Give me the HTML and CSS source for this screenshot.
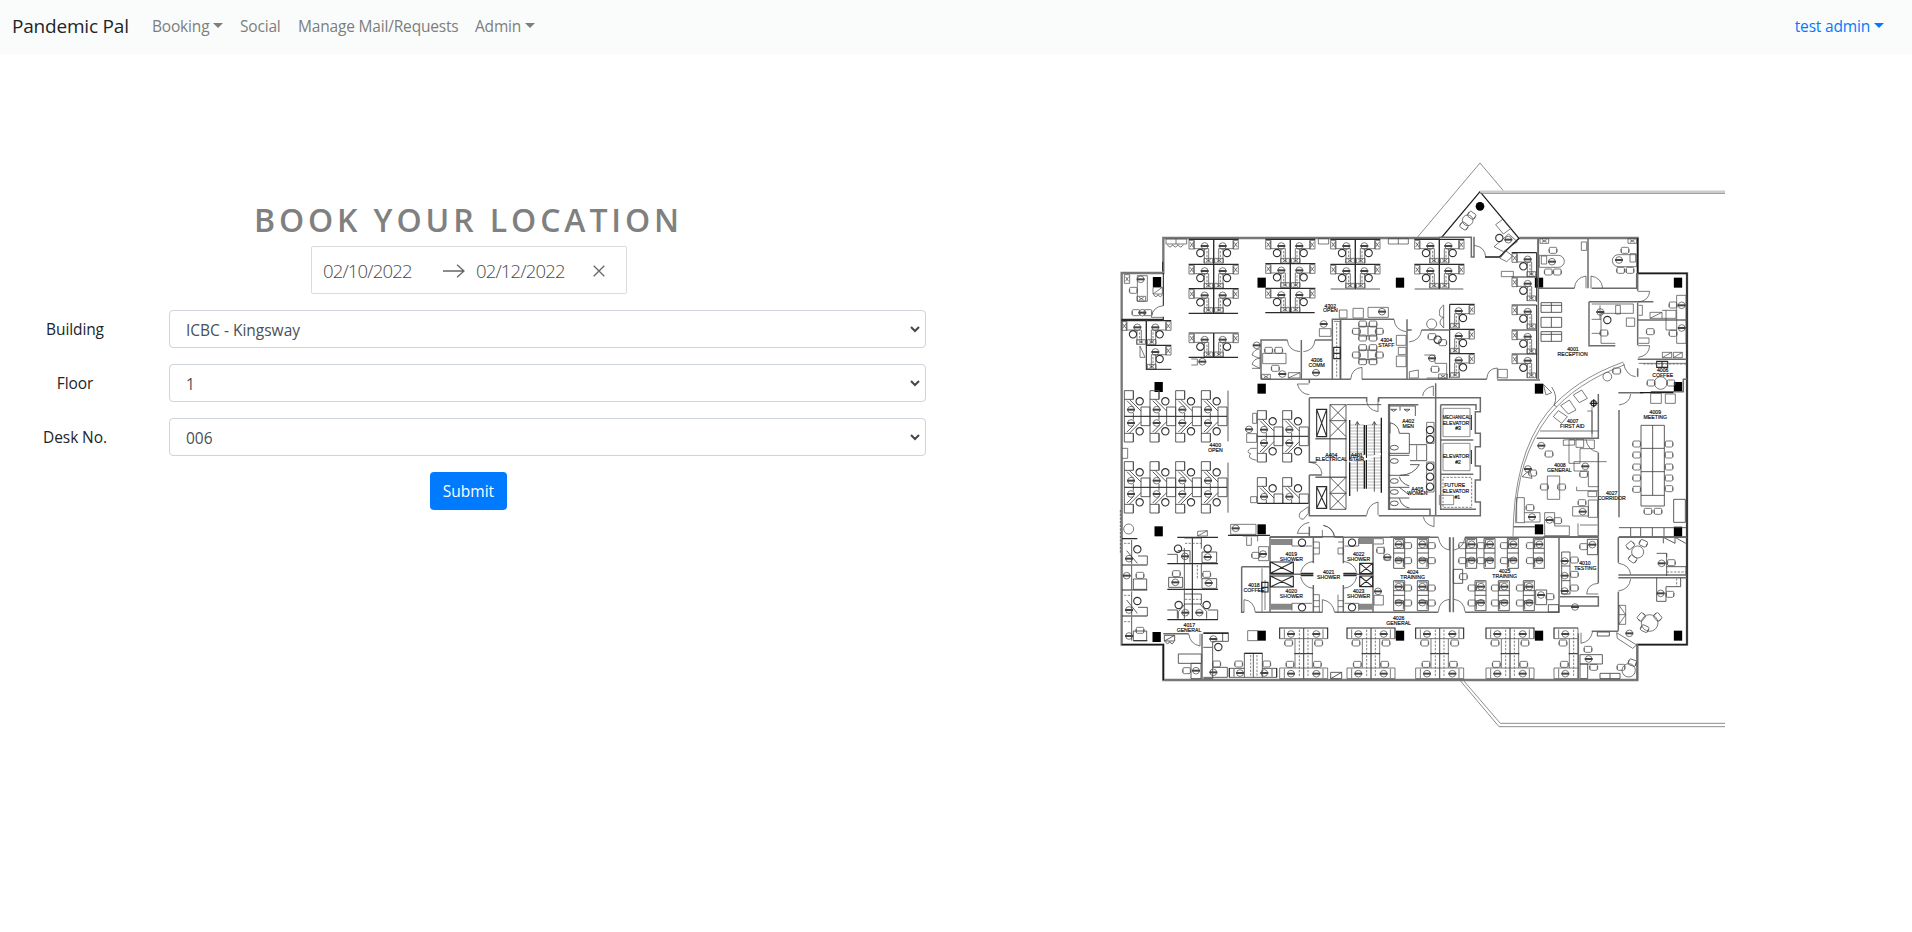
FILE: index.html
```html
<!DOCTYPE html>
<html lang="en">
<head>
<meta charset="utf-8">
<title>Pandemic Pal</title>
<link rel="stylesheet" href="styles.css">
</head>
<body>
<nav class="navbar">
  <a class="brand">Pandemic Pal</a>
  <div class="links">
    <a class="link caret booking">Booking</a>
    <a class="link social">Social</a>
    <a class="link mail">Manage Mail/Requests</a>
    <a class="link caret admin">Admin</a>
  </div>
  <a class="link caret user">test admin</a>
</nav>
<main class="page">
  <section class="booking-form">
    <h1 class="title">BOOK YOUR LOCATION</h1>
    <div class="dates">
      <span class="date">02/10/2022</span>
      <svg class="arrow" width="22" height="14" viewBox="0 0 22 14"><path d="M0 7H21M14 .8L21 7l-7 6.200"/></svg>
      <span class="date">02/12/2022</span>
      <svg class="clear" width="12" height="12" viewBox="0 0 12 12"><path d="M.7.7l10.600 10.600M11.300.7L.7 11.300"/></svg>
    </div>
    <div class="field"><span class="label">Building</span><div class="select"><span>ICBC - Kingsway</span><svg width="10" height="7" viewBox="0 0 10 7"><path d="M1 1l4 4 4-4"/></svg></div></div>
    <div class="field"><span class="label">Floor</span><div class="select"><span>1</span><svg width="10" height="7" viewBox="0 0 10 7"><path d="M1 1l4 4 4-4"/></svg></div></div>
    <div class="field"><span class="label">Desk No.</span><div class="select"><span>006</span><svg width="10" height="7" viewBox="0 0 10 7"><path d="M1 1l4 4 4-4"/></svg></div></div>
    <button class="submit">Submit</button>
  </section>
  <section class="floor">
    <svg class="plan" width="620" height="590" viewBox="0 0 1860 1770">
      <defs>
        <path id="c" d="M-11-6Q-11-9-8-9H8Q11-9 11-6V5Q11 9 7 9H-7Q-11 9-11 5ZM-12-4V6M12-4V6"/>
        <g id="t"><circle r="10"/><path class="tag" d="M-12 0H12"/></g>
        <circle id="o" r="11" class="seat"/>
        <path id="x" d="M-8-13H8V13H-8ZM-5-7L5 7M5-7L-5 7"/>
        <path id="y" d="M-13-7H13V7H-13ZM-7-4L7 4M7-4L-7 4"/>
        <rect id="k" class="solid" x="-12.500" y="-15" width="25" height="30"/>
        <g id="p">
          <path class="wall" d="M0 0H75M0 0V74"/>
          <path d="M15 28H60V5M15 28V68M28 28V72"/><path class="dash" d="M20 35V60"/>
          <use href="#t" x="27" y="20"/><use href="#o" x="40" y="41"/><use href="#x" x="66" y="16"/><use href="#y" x="16" y="64"/>
        </g>
        <g id="q"><use href="#p"/><use href="#p" transform="scale(-1 1)"/></g>
        <g id="w">
          <path class="mid" d="M0-77V0M0-77H27V-51H0M27-77V-51M15-51L50-16M8-47L28-27M27 0V-10M50 0V-28H77V0"/>
          <use href="#t" x="20" y="-20"/><use href="#o" x="46" y="-45"/>
        </g>
        <g id="v"><use href="#w"/><use href="#w" transform="scale(1 -1)"/><path class="wall" d="M0 0H77"/></g>
        <g id="h">
          <path class="wall" d="M0 0H-72V32"/>
          <path d="M-72 32H-26V120H-72V152H0V0M-58 4V30M-58 122V150M-26 32H0M-26 120H0"/><path class="wall" d="M-28 77H0"/>
          <path class="dash" d="M-13 5V148"/>
          <use href="#t" x="-38" y="18"/><use href="#t" x="-38" y="137"/><use href="#c" x="-45" y="45"/><use href="#c" x="-41" y="109"/>
        </g>
        <g id="m"><use href="#h"/><use href="#h" transform="scale(-1 1)"/></g>
        <g id="g"><path class="mid" d="M0 0H33V90H0ZM0 30H33M0 44H33M4 4H29V28M4 60H29V86"/><use href="#t" x="15" y="18"/><use href="#t" x="15" y="66"/><use href="#c" x="42" y="22" /><use href="#c" x="42" y="67"/></g>
        <g id="j"><use href="#g" transform="scale(-1 1)"/></g>
      </defs>

      <!-- outer shell and site lines -->
      <path class="shell" d="M990 264H160V369H35V1484H160V1590H1582V1484H1731V370H1583V264H1228"/>
      <path class="edge" d="M995 262L1110 125L1227 265L1168 321H1125M35 1484H160V1590M1582 1484H1731V370H1583V264"/>
      <path class="site" d="M922 262L1110 39L1180 122"/>
      <path class="band" d="M1110 125H1845"/><path class="site" d="M1110 130H1845M1050 1591L1167 1730H1845M1060 1591L1171 1720H1845"/>
      <circle class="solid" cx="1110" cy="169" r="13"/>

      <!-- structural columns -->
      <use href="#k" x="141" y="396"/><use href="#k" x="455" y="398"/><use href="#k" x="870" y="398"/><use href="#k" x="1287" y="398"/><use href="#k" x="1704" y="398"/>
      <use href="#k" x="146" y="711"/><use href="#k" x="455" y="716"/><use href="#k" x="1287" y="716"/><use href="#k" x="1704" y="711"/>
      <use href="#k" x="146" y="1144"/><use href="#k" x="455" y="1138"/><use href="#k" x="1287" y="1138"/><use href="#k" x="1704" y="1145"/>
      <use href="#k" x="140" y="1461"/><use href="#k" x="455" y="1457"/><use href="#k" x="870" y="1457"/><use href="#k" x="1287" y="1457"/><use href="#k" x="1704" y="1457"/>
      <path d="M413 1442H443V1472H413Z"/>

      <!-- north workstations -->
      <use href="#q" x="311" y="268"/><use href="#q" x="311" y="343"/><use href="#q" x="311" y="416"/><path class="wall" d="M236 490H384"/>
      <use href="#q" x="541" y="268"/><use href="#q" x="541" y="341"/><use href="#q" x="541" y="415"/><path class="wall" d="M466 488H614"/>
      <use href="#q" x="736" y="268"/><use href="#q" x="736" y="343"/><path class="mid" d="M662 417H810"/>
      <use href="#q" x="988" y="268"/><use href="#q" x="988" y="343"/><path class="mid" d="M914 417H1060"/>
      <use href="#q" x="311" y="549"/><path class="wall" d="M236 622H384"/>
      <use href="#p" x="109" y="512"/><use href="#p" transform="translate(109 512) scale(-1 1)"/><use href="#p" x="109" y="586"/><path class="wall" d="M109 658H184"/>
      <use href="#p" x="1019" y="463"/><use href="#p" x="1019" y="538"/><use href="#p" x="1019" y="611"/>
      <g transform="translate(1280 0) scale(-1 1)"><use href="#p" y="308"/><use href="#p" y="381"/><use href="#p" y="465"/><use href="#p" y="540"/><use href="#p" y="612"/></g>
      <path class="thick" d="M1285 264V688"/>
      <path d="M168 267H230V282H168ZM198 267V282M172 284q8 14 16 0q8 14 16 0q8 14 16 0M625 266H656V282H625ZM835 266H895V282H835ZM865 266V282"/>
      <path class="wall" d="M158 335V364M160 369V467M160 500V508H34"/>
      <path d="M160 467Q128 470 124 502H160M82 377H112V454H82Z"/>
      <use href="#x" x="51" y="387"/><use href="#t" x="92" y="388"/><use href="#y" x="94" y="446"/><use href="#c" x="70" y="421"/><use href="#t" x="97" y="488"/><use href="#c" x="78" y="488"/><use href="#c" x="114" y="488"/>
      <path d="M129 412H157V432H129ZM129 432L157 412M131 434q7 12 13 0q7 12 13 0M90 588V622H105ZM244 627H262V645H244"/><use href="#t" x="277" y="635"/>

      <!-- rooms 4302 - 4306 -->
      <path class="thick" d="M453 688V570H532M453 688H722M574 570V688M615 570H667M667 688V508H852M756 688H1130M891 508V688M891 540H905M935 540H1018M692 508V688M1162 690H1290"/>
      <path d="M532 570Q535 602 570 605M615 570Q612 602 580 605M722 688Q725 655 756 652V688M852 508Q855 540 888 545M935 540Q930 572 897 576M1130 688Q1132 655 1162 654V688M688 480H711V504H688ZM729 475H760V504H729ZM774 472H835V502H774ZM628 536H663V559H628ZM458 610H528V641H458ZM535 684V668H570V684ZL570 668M672 514H690V686M859 556H888V586H859ZM865 592H888V614H865ZM859 618H888V650H859ZM898 684V665L925 660V684Z"/>
      <path class="dash" d="M680 520V680"/>
      <path class="wall" d="M671 592H691V626H671ZM671 610H691"/>
      <use href="#t" x="816" y="485"/><use href="#t" x="641" y="522"/><use href="#t" x="618" y="668"/><use href="#c" x="476" y="601"/><use href="#c" x="506" y="601"/><use href="#c" x="496" y="655"/><use href="#t" x="517" y="672"/><use href="#y" x="468" y="680"/>
      <g id="tbl"><path class="mid" d="M747 529H800V558H747ZM774 529V558"/><use href="#c" x="758" y="522"/><use href="#c" x="789" y="522"/><use href="#c" x="758" y="564"/><use href="#c" x="789" y="564"/><use href="#c" x="739" y="544"/><use href="#c" x="808" y="544"/></g>
      <use href="#tbl" y="71"/>
      <path d="M450 597q-18 0-24 18q18 10 24 8M450 625q-18 0-24 18q18 10 24 12H426M450 600V655"/><use href="#t" x="440" y="586"/>
      <path d="M1001 465q-16 12-12 25q-4 10 12 12q-14 8-10 20l10 12V465M943 615H975V640H1010V684H950M1164 683V658H1192V684Z"/><circle cx="965" cy="522" r="15"/><use href="#o" x="983" y="569"/><use href="#c" x="966" y="560"/><use href="#c" x="998" y="578"/><use href="#t" x="966" y="625"/><use href="#c" x="975" y="658"/><use href="#y" x="999" y="679"/>

      <!-- apex office and north east rooms -->
      <path class="thick" d="M988 262H1084V321H1092V260M1434 265V278H1434V415M1284 415H1393M1445 415H1580V370M1284 264V385"/>
      <path d="M1092 286Q1125 290 1127 321M1393 415Q1396 383 1428 378V415M1478 415Q1475 383 1443 378V415M1288 316H1345A18 18 0 0 1 1345 352H1288ZM1580 314H1525A18 18 0 0 0 1525 350H1580ZM1294 318H1310V342H1294ZM1560 311H1577V336H1560ZM1414 276H1430V301H1414ZM1174 364H1210V380H1174ZM1157 224L1178 208L1202 236L1180 252ZM1152 290L1196 252L1222 275L1180 305ZM1170 325L1188 303L1208 318L1190 335Z"/>
      <circle cx="1073" cy="211" r="16"/><use href="#c" transform="translate(1085 196) rotate(35)"/><use href="#c" transform="translate(1062 228) rotate(35)"/><use href="#o" x="1168" y="264"/><use href="#t" x="1195" y="269"/><use href="#t" x="1326" y="335"/><use href="#t" x="1527" y="330"/><use href="#c" x="1329" y="301"/><use href="#c" x="1545" y="301"/><use href="#c" x="1315" y="366"/><use href="#c" x="1342" y="366"/><use href="#c" x="1532" y="361"/><use href="#c" x="1560" y="361"/><use href="#y" x="1303" y="273"/><use href="#y" x="1567" y="273"/>
      <path class="mid" d="M1293 458H1355V487H1293ZM1324 458V487M1293 502H1355V532H1293ZM1324 502V532M1293 545H1355V574H1293ZM1324 545V574M1293 466H1355M1293 553H1355"/>
      <path class="thick" d="M1535 455H1630M1437 455V587H1516M1437 455H1540"/><path d="M1445 462H1570V490H1473V508H1445M1473 508V580H1516M1445 550H1473M1517 466H1531V492H1517ZM1549 504H1574V529H1549ZM1470 466V508"/>
      <use href="#t" x="1471" y="486"/><use href="#o" x="1492" y="510"/><use href="#c" x="1482" y="549"/>
      <path class="thick" d="M1583 370V422M1583 458V585M1583 510H1730M1583 628H1730M1583 655V680M1622 725H1720V688H1731"/>
      <path d="M1583 424H1619Q1617 452 1585 456M1583 587H1619Q1617 617 1585 622M1577 680Q1550 678 1540 640M1620 505V487H1656V505ZL1656 487M1656 481H1698V505H1656M1700 436H1728V580H1700ZM1668 480V540H1700M1657 623V607H1685V623ZL1685 607M1690 623V607H1717V623ZL1717 607M1586 466H1597V496H1586M1586 564H1617V580H1586M1586 640H1730"/>
      <use href="#t" x="1715" y="466"/><use href="#t" x="1715" y="534"/><use href="#c" x="1689" y="465"/><use href="#c" x="1689" y="550"/><use href="#c" x="1621" y="545"/><path class="wall" d="M1640 634H1673V652H1640ZM1656 634V652"/><path class="dash" d="M1600 642H1728"/>
      <circle cx="1652" cy="699" r="19"/><use href="#c" x="1623" y="699"/><use href="#c" x="1683" y="699"/>

      <!-- curved corridor wall -->
      <path class="site" d="M1540 636Q1390 690 1310 790Q1210 920 1209 1160M1545 644Q1398 698 1318 795Q1219 924 1216 1120"/>
      <path d="M1300 703L1325 728L1308 735ZM1325 711Q1345 740 1332 765L1340 770"/><circle cx="1492" cy="680" r="13"/><use href="#c" x="1520" y="663"/>

      <!-- west open area -->
      <use href="#v" x="43" y="799"/><use href="#v" x="120" y="799"/><use href="#v" x="197" y="799"/><use href="#v" x="274" y="799"/><path class="mid" d="M354 722V874M354 938V1088"/>
      <use href="#v" x="43" y="1012"/><use href="#v" x="120" y="1012"/><use href="#v" x="197" y="1012"/><use href="#v" x="274" y="1012"/>
      <use href="#v" x="442" y="859"/><use href="#v" x="518" y="859"/><use href="#w" x="442" y="1060"/><use href="#w" x="518" y="1060"/><path class="wall" d="M442 1060H596"/>
      <path d="M36 895H53V925H36M428 790H440V820H428ZM410 851H440V877H410ZM440 895H422q-16 12 0 16q-14 14 18 20M422 1040H440V1058H422ZM570 1088q-8 18 10 20L595 1090V1070Z"/><use href="#t" x="417" y="838"/>
      <circle cx="56" cy="1137" r="15"/><path class="mid dash" d="M31 1080V1210"/>
      <path d="M362 1123H438V1153H362Z"/><path class="wall" d="M354 1156H480"/><use href="#t" x="377" y="1135"/>

      <!-- core -->
      <path class="thick" d="M598 690V700M598 743H770V755M806 755V743H960M598 743V937H620M598 975V1097H770M598 975H636M806 1097H960V1078H836V764H925M700 1160H480M598 1130V1160H640M938 743H1111V785H1096V850H1111V890H1096V948H1111V990H1096V1056H1111V1097H938M977 700V743M977 743V1097M992 764V1078H1098M992 764H1098V780M992 870H1090M992 973H1090M616 866H710M616 982H710"/>
      <path d="M562 702H596M562 702Q570 732 598 734M770 755Q775 780 804 785V745M938 738Q940 715 970 708V738M770 1095Q775 1062 804 1056V1095M600 937Q632 940 636 972M562 1150Q570 1122 598 1117M562 1150H598M640 1126Q668 1132 674 1160M940 1100Q944 1124 972 1130V1100"/>
      <path class="wall" d="M620 778H650V860H620ZL650 860M650 778L620 860M620 1010H650V1075H620ZL650 1075M650 1010L620 1075"/>
      <path class="mid" d="M660 764H708V1078H660ZM660 764L708 812L660 860M708 764L660 812L708 860M660 812H708M660 982L708 1030L660 1078M708 982L660 1030L708 1078M660 1030H708M770 764H814M710 764H770"/>
      <path class="stairs" d="M742 824V1018M793 824V1018"/><path class="mid" d="M742 815V1025M793 815V1025M736 825L742 815L748 825M787 825L793 815L799 825"/><path class="edge" d="M719 810V1038M763 825V1016M769 825V1016M814 803V1028"/><path class="cut" d="M718 935L764 918L765 928L813 912"/>
      <path class="mid" d="M839 764V1078M839 768H916V798M870 770V782M836 910H898M836 916H898M836 976H898M836 1012H898M836 1044H898M898 850V910M898 884H950V932H900M842 778H860L851 784ZM882 778H900L891 784ZM840 850V818Q866 824 868 850H898M870 976Q910 975 928 944H900M868 980Q873 1000 898 1008M868 1045Q875 1070 898 1074M868 1012L898 1035"/>
      <g class="mid"><ellipse cx="853" cy="893" rx="12" ry="7"/><ellipse cx="853" cy="933" rx="12" ry="7"/><ellipse cx="853" cy="993" rx="12" ry="7"/><ellipse cx="853" cy="1026" rx="12" ry="7"/><ellipse cx="853" cy="1060" rx="12" ry="7"/></g>
      <path d="M950 817H972V880H950ZM950 936H972V1026H950ZM920 886V930"/><use href="#o" x="960" y="840"/><use href="#o" x="960" y="868"/><use href="#o" x="960" y="950"/><use href="#o" x="960" y="980"/><use href="#o" x="960" y="1010"/>
      <path class="site" d="M999 775H1080V860H999ZM999 880H1080V962H999ZM988 1036H1031V1064H988Z"/><path class="dash" d="M999 982H1085V1072H999Z"/><path class="wall" d="M1084 795V840M1084 900V942"/>

      <!-- rooms 4007, 4008, 4009 and corridor -->
      <path class="thick" d="M1465 732V865H1280M1465 908V1160M1527 780V1102M1525 728H1600M1210 1130H1275M1300 1160H1465"/>
      <path class="edge" d="M1590 728H1690"/><path d="M1562 732Q1560 760 1527 765M1428 868Q1432 900 1465 907M1290 843H1465M1622 730H1654V760H1622ZM1666 732H1696V760H1666ZM1432 783H1446V852M1446 770V862M1352 767L1378 750L1398 780L1375 792ZM1390 735L1415 720L1432 745L1408 758ZM1330 800L1345 782L1372 800L1355 820ZM1377 870H1453V896H1410V940H1377ZM1360 886V870L1394 868V885ZM1398 868H1421V892H1398ZM1490 935H1392V963H1435V1010H1465M1400 1010V1022H1465M1312 978H1349V1048H1312ZM1388 1070H1435V1098H1388ZM1435 1050H1463V1102H1435ZM1434 1024H1460V1040H1434ZM1220 1043H1243V1116H1290V1088H1243M1220 1043V1118H1245M1304 1088H1334V1128H1378V1157H1304ZM1404 1120V1157H1463M1410 1125H1463M1236 980L1260 960L1266 985Z"/>
      <circle class="seat" cx="1451" cy="760" r="8"/><path class="edge" d="M1439 760H1463M1451 748V772"/>
      <use href="#t" x="1294" y="887"/><use href="#c" x="1317" y="912"/><use href="#t" x="1426" y="949"/><use href="#c" x="1421" y="973"/><use href="#t" x="1254" y="957"/><use href="#c" x="1268" y="969"/><use href="#c" x="1303" y="1011"/><use href="#c" x="1355" y="1011"/><use href="#t" x="1418" y="1085"/><use href="#c" x="1416" y="1058"/><use href="#c" x="1260" y="1073"/><use href="#t" x="1266" y="1101"/><use href="#t" x="1318" y="1110"/><use href="#c" x="1343" y="1112"/>
      <path class="mid" d="M1593 826H1663V1068H1593ZM1628 826V1036M1593 895H1663M1593 965H1663M1593 1036H1663M1691 1048H1726V1117H1691ZM1527 1133H1730M1562 1133V1158M1592 1133V1158M1627 1133V1158M1662 1133V1158M1527 1160H1730M1660 1180V1162L1695 1180V1162L1727 1180"/>
      <use href="#c" x="1580" y="882"/><use href="#c" x="1580" y="915"/><use href="#c" x="1580" y="951"/><use href="#c" x="1580" y="984"/><use href="#c" x="1580" y="1018"/><use href="#c" x="1677" y="882"/><use href="#c" x="1677" y="915"/><use href="#c" x="1677" y="951"/><use href="#c" x="1677" y="984"/><use href="#c" x="1677" y="1016"/><use href="#c" x="1614" y="1084"/><use href="#c" x="1644" y="1084"/>

      <!-- south west workstations -->
      <g transform="translate(0 1140)">
        <path class="wall" d="M36 26H82M36 105H112M36 180H112M36 258H112M70 332H112M202 22H324M172 101H324M172 178H324M172 269H324M247 24V269"/>
        <path class="mid" d="M65 30V102M65 106V180M65 184V256M65 260V332M50 62L82 100M50 210L82 250M84 78H112V104M70 147H110V178H70ZM84 232H112V258M70 303H110V332H70ZM223 24H274V56M223 54V269M274 102V146M274 192V222M223 192H274M223 222H274M172 73H202V101M203 62H240V98M276 66H320V98H276ZM176 142H218V172H176ZM276 146H320V175H276ZM172 240H202V266M293 240H323V268M205 266V245L225 222M290 266V245L270 222"/>
        <path class="dash" d="M42 40H65M42 196H65M42 275H65M225 40H274M225 208H274M262 105V145"/>
        <use href="#o" x="82" y="58"/><use href="#o" x="82" y="213"/><use href="#t" x="57" y="86"/><use href="#t" x="50" y="137"/><use href="#t" x="57" y="240"/><use href="#t" x="57" y="318"/><use href="#c" x="90" y="136"/><use href="#c" x="90" y="301"/>
        <use href="#o" x="204" y="56"/><use href="#o" x="293" y="56"/><use href="#t" x="225" y="79"/><use href="#t" x="293" y="81"/><use href="#c" x="199" y="131"/><use href="#c" x="290" y="133"/><use href="#t" x="196" y="157"/><use href="#t" x="296" y="159"/><use href="#o" x="206" y="225"/><use href="#o" x="290" y="225"/><use href="#t" x="226" y="248"/><use href="#t" x="268" y="248"/>
        <path d="M263 18V4L292 2V18ZL292 2M398 18H443V34M410 20V46H424V22M446 50H476V92H446Z"/><use href="#t" x="459" y="72"/><use href="#c" x="437" y="76"/>
        <path class="thick" d="M395 110H478M395 110V247H402M436 247H637M480 20V247M480 22H637M674 22H960M674 247H985M610 22V100M610 165V247M700 22V100M700 165V247M789 22V247M478 133H610M700 133H789M160 311H236M276 311V450"/>
        <path d="M402 247V209Q432 212 436 247M236 311Q240 342 270 348V311M637 22V0M674 22Q668 -8 640 -14M637 247V209Q668 214 674 247M572 127Q580 98 610 94M572 141Q580 172 610 175M740 127Q732 98 700 94M740 141Q732 172 700 175M610 36H628V72H610M610 54H628M610 194H628V247M610 212H628M610 230H628M684 36H700M684 54H700V72H684ZM684 194V247M684 212H700M684 230H700M456 115V245M465 150V240"/>
        <path class="wall" d="M481 96H550V130H481ZL550 130M550 96L481 130M481 138H550V171H481ZL550 171M550 138L481 171M749 100H788V131H749ZL788 131M788 100L749 131M749 138H788V170H749ZL788 170M788 138L749 170M455 157H474V186H455ZM455 172H474M572 130H610M572 137H610M700 130H740M700 137H740"/>
        <path class="bench" d="M482 36H546M482 230H546M746 33H789M746 230H789"/><path d="M546 26V48H606M546 242V220H606M746 26V48H704M746 242V220H704"/>
        <use href="#o" x="576" y="38"/><use href="#o" x="576" y="232"/><use href="#o" x="726" y="38"/><use href="#o" x="726" y="232"/>
        <path class="mid" d="M163 333V316H194V333ZL194 316M166 335q7 12 13 0q7 12 13 0M205 372H274V400H205ZM243 400H273V446H243ZM280 308H355V334H308V446H280M280 352H306M308 412H352V442H280M338 308V334M403 442V370H457V442M430 370V442M358 415H403M457 415H500V442H358V415M372 417V440M486 417V440M662 446V427H695V446ZL695 427"/>
        <path class="wall" d="M358 414V442M500 414V442M280 310H355M403 370H457"/><path class="dash" d="M422 375V440M441 375V440"/>
        <use href="#t" x="258" y="422"/><use href="#c" x="230" y="422"/><use href="#t" x="310" y="327"/><use href="#o" x="325" y="351"/><use href="#c" x="320" y="402"/><use href="#t" x="310" y="427"/><use href="#c" x="386" y="402"/><use href="#c" x="470" y="402"/><use href="#t" x="390" y="429"/><use href="#t" x="463" y="429"/>
        <use href="#m" x="581" y="294"/><use href="#m" x="783" y="294"/><use href="#m" x="989" y="294"/><use href="#m" x="1200" y="294"/><use href="#h" x="1404" y="294"/>
        <use href="#g" x="851" y="25"/><use href="#g" x="922" y="25"/><use href="#g" x="851" y="152"/><use href="#g" x="922" y="152"/>
        <use href="#c" x="812" y="61"/><use href="#t" x="832" y="82"/><use href="#t" x="804" y="184"/><path d="M792 196H820V225H792ZM792 26H820V42H792M822 50V90H843"/>
      </g>

      <!-- south east rooms -->
      <g transform="translate(900 1140)">
        <path class="thick" d="M-60 22H85M120 22V247M130 22V247M165 22H565M165 247H447V22M565 22V160M450 200H565V228H450M625 22H830M625 22V98M625 135H830M625 143H830M625 185V302M505 310V448M545 304H625M682 342V450"/>
        <path d="M85 22Q90 55 118 60V22M165 22Q160 55 132 60M85 245Q88 212 118 208V245M165 245Q162 212 132 208M530 192Q532 162 565 160M530 192H565M625 100Q658 104 662 133M625 183Q658 178 662 147M513 340Q542 335 548 304M513 340V308M620 308L680 345L668 355L622 325ZM627 226H647V283H627ZL647 254L627 283M627 254H647"/>
        <use href="#j" x="200" y="25"/><use href="#j" x="255" y="25"/><use href="#j" x="325" y="25"/><use href="#j" x="403" y="25"/>
        <use href="#j" x="228" y="152"/><use href="#j" x="298" y="152"/><use href="#j" x="373" y="152"/>
        <path class="mid" d="M130 118H158V160H130ZM377 180H410V224H377ZM415 224H446V246H415ZM455 66H480V192H455ZM455 108H480M455 152H480M532 28H563V74H532ZM740 70H770V138M740 143V214H768V170H812V143M770 110H828V135M770 70V80M510 374H577V402H510ZM510 402H533V446H510ZM570 430H630V446H570ZM600 430V446M562 306H598V318H562Z"/>
        <use href="#c" x="160" y="140"/><use href="#t" x="393" y="195"/><use href="#c" x="420" y="200"/><use href="#t" x="464" y="93"/><use href="#t" x="464" y="137"/><use href="#t" x="464" y="183"/><use href="#c" x="493" y="90"/><use href="#c" x="493" y="133"/><use href="#c" x="493" y="174"/><use href="#t" x="547" y="44"/><use href="#c" x="521" y="50"/><use href="#t" x="495" y="231"/><use href="#t" x="755" y="100"/><use href="#c" x="784" y="98"/><use href="#t" x="752" y="190"/><use href="#c" x="780" y="193"/>
        <circle cx="683" cy="66" r="18"/><use href="#c" transform="translate(661 46) rotate(-40)"/><use href="#c" transform="translate(700 40) rotate(25)"/><use href="#c" transform="translate(668 87) rotate(35)"/><circle cx="719" cy="279" r="25"/><use href="#c" transform="translate(694 261) rotate(-50)"/><use href="#c" transform="translate(743 261) rotate(50)"/><use href="#c" transform="translate(704 296) rotate(25)"/>
        <circle cx="656" cy="421" r="20"/><use href="#c" transform="translate(667 398) rotate(20)"/><use href="#c" x="633" y="412"/><use href="#c" x="534" y="358"/><use href="#t" x="536" y="387"/><use href="#c" x="551" y="412"/><use href="#t" x="658" y="310"/><path class="dash" d="M800 145V170M770 126H828"/>
      </g>

      <g class="rooms">
        <text x="661" y="473">4302</text><text x="661" y="487">OPEN</text><text x="829" y="576">4304</text><text x="829" y="591">STAFF</text><text x="620" y="636">4306</text><text x="620" y="650">COMM</text>
        <text x="1389" y="603">4001</text><text x="1388" y="618">RECEPTION</text><text x="1658" y="667">4006</text><text x="1658" y="681">COFFEE</text>
        <text x="316" y="890">4400</text><text x="316" y="905">OPEN</text><text x="664" y="920">A404</text><text x="664" y="934">ELECTRICAL</text><text x="740" y="920">A401</text><text x="740" y="934">STAIR</text><text x="895" y="818">A402</text><text x="895" y="833">MEN</text><text x="922" y="1022">A405</text><text x="922" y="1036">WOMEN</text>
        <text x="1040" y="808" textLength="84" lengthAdjust="spacingAndGlyphs">MECHANICAL</text><text x="1038" y="824">ELEVATOR</text><text x="1044" y="840">#3</text><text x="1038" y="925">ELEVATOR</text><text x="1044" y="941">#2</text><text x="1034" y="1011">FUTURE</text><text x="1038" y="1029">ELEVATOR</text><text x="1042" y="1046">#1</text>
        <text x="1388" y="820">4007</text><text x="1387" y="835">FIRST AID</text><text x="1350" y="952">4008</text><text x="1348" y="967">GENERAL</text><text x="1636" y="792">4009</text><text x="1636" y="806">MEETING</text><text x="1505" y="1034">4027</text><text x="1505" y="1049">CORRIDOR</text>
        <text x="544" y="1219">4019</text><text x="544" y="1233">SHOWER</text><text x="544" y="1330">4020</text><text x="544" y="1344">SHOWER</text><text x="656" y="1273">4021</text><text x="656" y="1288">SHOWER</text><text x="746" y="1219">4022</text><text x="746" y="1233">SHOWER</text><text x="746" y="1330">4023</text><text x="746" y="1344">SHOWER</text>
        <text x="432" y="1311">4018</text><text x="432" y="1326">COFFEE</text><text x="238" y="1430">4017</text><text x="237" y="1445">GENERAL</text><text x="908" y="1273">4024</text><text x="908" y="1288">TRAINING</text><text x="866" y="1411">4026</text><text x="866" y="1426">GENERAL</text><text x="1184" y="1268">4025</text><text x="1184" y="1283">TRAINING</text><text x="1425" y="1246">4010</text><text x="1426" y="1261">TESTING</text>
      </g>
    </svg>
  </section>
</main>
</body>
</html>
```
FILE: styles.css
```css
* { box-sizing: border-box; }
body { margin: 0; background: #fff; color: #212529; font: 15.500px/24px "Open Sans", "Noto Sans", sans-serif; }
.navbar { height: 54px; display: flex; align-items: center; background: #fafcfb; padding: 0 28px 2px 12px; }
.brand { width: 140px; font-size: 19px; letter-spacing: -0.200px; white-space: nowrap; }
.links { display: flex; flex: 1; }
.link { color: #7d7e7d; white-space: nowrap; letter-spacing: -0.180px; }
.caret::after { content: ""; display: inline-block; margin-left: 4px; vertical-align: 4px; border: 5px solid transparent; border-top-color: currentColor; border-bottom: 0; }
.booking { width: 88px; }
.social { width: 58px; }
.mail { width: 177px; }
.user { color: #007bff; }
.page { display: grid; grid-template-columns: 956px 1fr; }
.booking-form { padding: 146px 30px 0 0; display: flex; flex-direction: column; align-items: center; }
.title { margin: 0 0 7px 11px; font-size: 32px; line-height: 39px; font-weight: 600; letter-spacing: 3.900px; color: #808080; white-space: nowrap; }
.dates { width: 316px; height: 48px; margin: 0 0 16px 12px; border: 1px solid #dbdbdb; border-radius: 2px; display: flex; align-items: center; padding: 2px 21px 0 11px; color: #484848; }
.date { font-size: 18.500px; font-weight: 300; letter-spacing: -0.850px; width: 89px; }
.arrow { margin: 0 11px 0 31px; }
.clear { margin-left: auto; }
.arrow path, .clear path { fill: none; stroke: #666; stroke-width: 1.300; }
.field { width: 100%; display: grid; grid-template-columns: 150px 1fr; column-gap: 19px; margin-bottom: 16px; }
.label { text-align: center; line-height: 38px; letter-spacing: -0.100px; }
.select { height: 38px; border: 1px solid #ced4da; border-radius: 4px; display: flex; justify-content: space-between; align-items: center; padding: 2px 5px 0 16px; color: #495057; }
.select svg { fill: none; stroke: #40474e; stroke-width: 2; margin-bottom: 2px; }
.submit { width: 77px; height: 38px; margin-left: 11px; padding: 0; border: 0; border-radius: 4px; background: #007bff; color: #fff; font: inherit; }
.floor { padding: 96px 0 0 154px; }
.plan { display: block; fill: none; stroke: #4a4a4a; stroke-width: 2.200; }
.plan .tag { stroke: #444; stroke-width: 6; }
.plan .seat { stroke: #333; stroke-width: 3.300; }
.plan .mid { stroke: #444; stroke-width: 2.600; }
.plan .wall { stroke: #2b2b2b; stroke-width: 3.300; }
.plan .thick { stroke: #6c6c6c; stroke-width: 4.500; }
.plan .shell { stroke: #777; stroke-width: 7; }
.plan .edge { stroke: #1c1c1c; stroke-width: 4; }
.plan .site { stroke: #777; stroke-width: 2.500; }
.plan .band { stroke: #ccc; stroke-width: 7; }
.plan .bench { stroke: #888; stroke-width: 18; }
.plan .dash { stroke: #555; stroke-dasharray: 7 4; }
.plan .stairs { stroke: #777; stroke-width: 42; stroke-dasharray: 2 7; }
.plan .cut { stroke: #fff; stroke-width: 6; }
.plan .solid { fill: #000; stroke: none; }
.rooms { fill: #111; stroke: #111; stroke-width: .5; font: 15.500px "Liberation Sans", sans-serif; text-anchor: middle; }
```
